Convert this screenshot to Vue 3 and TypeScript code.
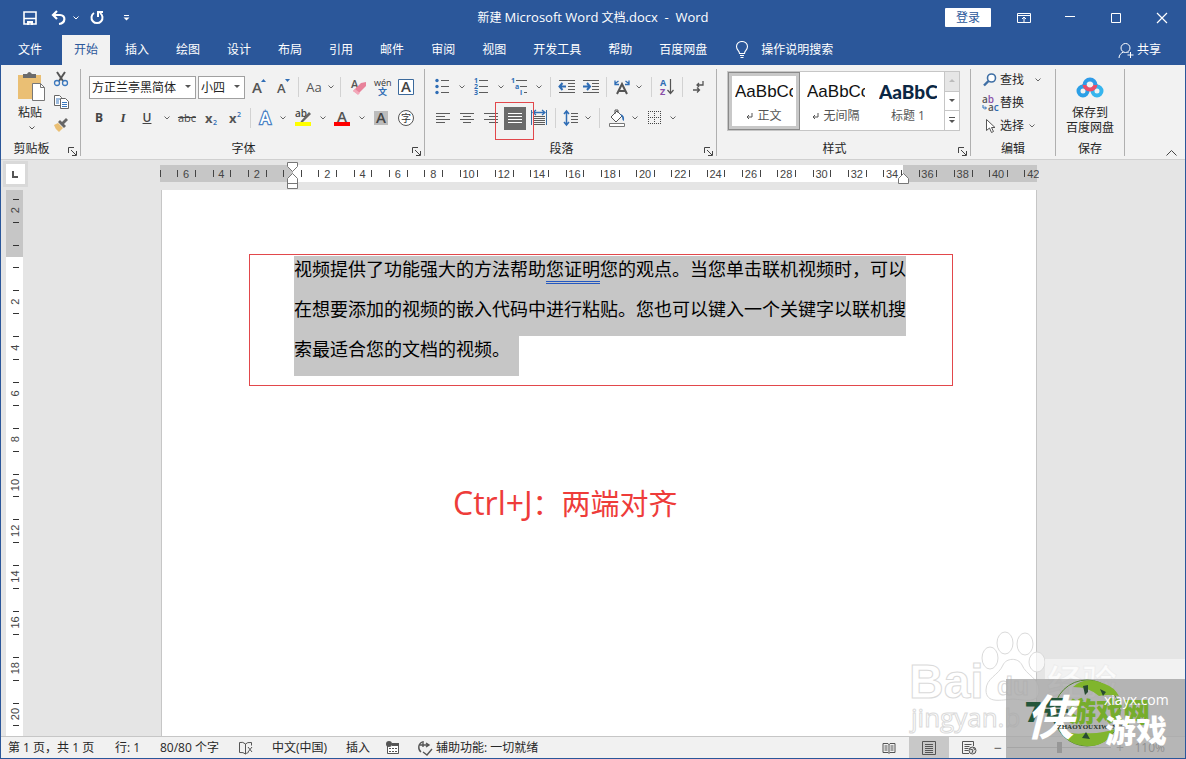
<script setup lang="ts">
import { ref } from 'vue'

interface Tool {
  kind: 'icon' | 'glyph' | 'chev' | 'sep'
  w: number
  name?: string
  text?: string
  label?: string
}

const tabs = ['文件', '开始', '插入', '绘图', '设计', '布局', '引用', '邮件', '审阅', '视图', '开发工具', '帮助', '百度网盘']
const activeTab = ref('开始')
const zoom = ref(110)

const icon = (name: string, w: number, label: string): Tool => ({ kind: 'icon', name, w, label })
const glyph = (name: string, w: number, text: string, label: string): Tool => ({ kind: 'glyph', name, w, text, label })
const chev = (w: number): Tool => ({ kind: 'chev', w, label: '更多选项' })
const sep = (w: number): Tool => ({ kind: 'sep', w })

const fontTop: Tool[] = [
  icon('grow', 24, '增大字号'), icon('shrink', 24, '减小字号'), sep(6),
  glyph('case', 26, 'Aa', '更改大小写'), chev(8), sep(11),
  icon('eraser', 24, '清除格式'), icon('pinyin', 24, '拼音指南'), icon('boxed', 24, '字符边框'),
]
const fontBottom: Tool[] = [
  glyph('bold', 24, 'B', '加粗'), glyph('italic', 24, 'I', '倾斜'), glyph('under', 24, 'U', '下划线'), chev(16),
  glyph('strike', 24, 'abc', '删除线'), icon('sub', 24, '下标'), icon('sup', 24, '上标'), sep(7),
  icon('effect', 24, '文本效果'), chev(10), icon('highlight', 30, '突出显示'), chev(10),
  icon('color', 28, '字体颜色'), chev(12), icon('shade', 26, '字符底纹'), icon('circled', 24, '带圈字符'),
]
const paraTop: Tool[] = [
  icon('bullets', 24, '项目符号'), chev(14), icon('numbers', 26, '编号'), chev(12), icon('levels', 26, '多级列表'), chev(12), sep(10),
  icon('outdent', 24, '减少缩进量'), icon('indent', 24, '增加缩进量'), sep(6), icon('asian', 26, '中文版式'), chev(8), sep(16),
  icon('sort', 16, '排序'), sep(14), icon('marks', 18, '显示编辑标记'),
]
const paraBottom: Tool[] = [
  icon('left', 24, '左对齐'), icon('center', 24, '居中'), icon('right', 24, '右对齐'), icon('justify', 24, '两端对齐'), icon('spread', 24, '分散对齐'), sep(8),
  icon('spacing', 24, '行距'), chev(10), sep(12), icon('bucket', 24, '底纹'), chev(12), icon('borders', 26, '边框'), chev(12),
]

const T = 'font-family="Open Sans, Noto Sans CJK SC, sans-serif"'
const hl = (ys: number[], x1: number, x2: number, c = '#5c5c5c') =>
  ys.map((y) => `<path d="M${x1} ${y + 0.5}H${x2}" stroke="${c}"/>`).join('')

// Every ribbon icon is drawn on a 24 x 24 grid.
const icons: Record<string, string> = {
  grow: `<text x="5" y="18" font-size="15" font-weight="600" fill="#555" ${T}>A</text><path d="M14 7l2.500-3 2.500 3z" fill="#2f6db5"/>`,
  shrink: `<text x="6" y="18" font-size="13" font-weight="600" fill="#555" ${T}>A</text><path d="M14 4h5l-2.500 3z" fill="#2f6db5"/>`,
  eraser: `<text x="5" y="13" font-size="11" font-weight="600" fill="#555" ${T}>A</text><path d="M7 16l8-8 5-1 0 4-8 8z" fill="#e8829a"/><path d="M7 16l2-2 5 4-2 2z" fill="#f3a9ba"/>`,
  pinyin: `<text x="4" y="11" font-size="9" fill="#333" ${T}>wén</text><text x="8" y="20" font-size="9" font-weight="700" fill="#2f6db5" ${T}>文</text>`,
  boxed: `<path d="M4.500 4.500h15v15h-15z" fill="#fff" stroke="#3c6a9c"/><text x="7" y="17" font-size="15" font-weight="600" fill="#444" ${T}>A</text>`,
  sub: `<text x="6" y="17" font-size="13" font-weight="700" fill="#555" ${T}>x</text><text x="14" y="19" font-size="7" font-weight="600" fill="#2f6db5" ${T}>2</text>`,
  sup: `<text x="6" y="17" font-size="13" font-weight="700" fill="#555" ${T}>x</text><text x="14" y="11" font-size="7" font-weight="600" fill="#2f6db5" ${T}>2</text>`,
  effect: `<text x="6" y="18" font-size="16" font-weight="600" fill="#fff" stroke="#4a82c4" stroke-width="2.500" paint-order="stroke" ${T}>A</text>`,
  highlight: `<text x="4" y="11" font-size="10" font-weight="600" fill="#444" ${T}>ab</text><path d="M10 15l8-9 2 2-8 8-3 1z" fill="#666"/><path d="M4 16h16v4H4z" fill="#ff0"/>`,
  color: `<text x="7" y="16" font-size="15" font-weight="600" fill="#555" ${T}>A</text><path d="M4 16h16v4H4z" fill="#f00"/>`,
  shade: `<path d="M5 5h14v14H5z" fill="#bcbcbc"/><text x="7" y="17" font-size="15" font-weight="600" fill="#444" ${T}>A</text>`,
  circled: `<circle cx="12" cy="12" r="7.500" fill="#fff" stroke="#555"/><text x="7" y="16" font-size="10" fill="#333" ${T}>字</text>`,
  bullets: `<g fill="#2f6db5"><circle cx="6" cy="5.500" r="1.700"/><circle cx="6" cy="11.500" r="1.700"/><circle cx="6" cy="17.500" r="1.700"/></g>` + hl([5, 11, 17], 10, 18),
  numbers: `<g fill="#2f6db5" font-size="7" font-weight="700" ${T}><text x="4" y="8">1</text><text x="4" y="14">2</text><text x="4" y="20">3</text></g>` + hl([5, 11, 17], 9, 18),
  levels: `<g fill="#2f6db5" font-size="7" font-weight="700" ${T}><text x="3" y="8">1</text><text x="7" y="14">a</text><text x="12" y="20">i</text></g>` + hl([5], 8, 19) + hl([11], 12, 19) + hl([17], 16, 19),
  outdent: hl([5, 17], 4, 20) + hl([8, 11, 14], 13, 20) + `<path d="M4 11.500h7M7.500 8l-3 3.500 3 3.500" fill="none" stroke="#2f6db5" stroke-width="2"/>`,
  indent: hl([5, 17], 4, 20) + hl([8, 11, 14], 13, 20) + `<path d="M4 11.500h7M8 8l3 3.500-3 3.500" fill="none" stroke="#2f6db5" stroke-width="2"/>`,
  asian: `<path d="M7 19l5-10 5 10M9 16h6" fill="none" stroke="#555" stroke-width="2"/><path d="M4.500 9l4-3M5 5.500v4h4M19.500 9l-4-3M19 5.500v4h-4" fill="none" stroke="#2f6db5" stroke-width="1.300"/>`,
  sort: `<text x="5" y="11" font-size="9" font-weight="700" fill="#2f6db5" ${T}>A</text><text x="5" y="20" font-size="9" font-weight="700" fill="#8a4fa8" ${T}>Z</text><path d="M15.500 4v14M12.500 15l3 3.500 3-3.500" fill="none" stroke="#555" stroke-width="1.200"/>`,
  marks: `<path d="M17 6v4h-6M13 8l-2 2 2 2M7 15h6M11 12.500l2.500 2.500-2.500 2.500" fill="none" stroke="#555" stroke-width="1.300"/>`,
  left: hl([7, 13], 5, 19) + hl([10, 16], 5, 14),
  center: hl([7, 13], 5, 19) + hl([10, 16], 8, 16),
  right: hl([7, 13], 5, 19) + hl([10, 16], 10, 19),
  justify: `<path d="M1 1h22v23H1z" fill="#6a6a6a"/>` + hl([7, 10, 13, 16], 5, 19, '#fff'),
  spread: `<path d="M4.500 4v15M19.500 4v15" stroke="#3a6ea5"/>` + hl([10, 12, 14, 16, 18], 6, 18) + `<path d="M6 6.500h12M9 4L6 6.500 9 9M15 4l3 2.500L15 9" fill="none" stroke="#2f6db5" stroke-width="1.300"/>`,
  spacing: `<path d="M7.500 5v13M5 8l2.500-3L10 8M5 16l2.500 3 2.500-3" fill="none" stroke="#2f6db5" stroke-width="1.500"/>` + hl([7, 10, 13, 16], 12, 19),
  bucket: `<path d="M6 11l6-6 5 5-6 6z" fill="#fff" stroke="#555"/><path d="M10 8V4h3v3" fill="none" stroke="#555"/><path d="M15 8q5 1 4 7-2-1-2-4z" fill="#2f6db5"/><path d="M4.500 17.500h15v3h-15z" fill="#fff" stroke="#777"/>`,
  borders: `<path d="M6 5.500h13M6 11.500h13M6 17.500h13M6.500 5v13M12.500 5v13M18.500 5v13" fill="none" stroke="#444" stroke-dasharray="1 1"/>`,
}

const unitX = 17.65
const originX = 133
const hTicks = Array.from({ length: 50 }, (_, i) => originX + (i - 7.5) * unitX)
const hNumbers = Array.from({ length: 25 }, (_, i) => (i - 3) * 2)
  .filter((n) => n !== 0 && n <= 42)
  .map((n) => ({ n: Math.abs(n), x: originX + n * unitX }))
const unitY = 22.9
const originY = 66
const vTicks = Array.from({ length: 24 }, (_, i) => originY + (i - 2.5) * unitY)
const vNumbers = Array.from({ length: 12 }, (_, i) => (i - 1) * 2)
  .filter((n) => n !== 0)
  .map((n) => ({ n: Math.abs(n), y: originY + n * unitY }))

const rows = { font: [fontTop, fontBottom], para: [paraTop, paraBottom] }
const styles = [
  { name: '正文', mark: true, kind: 'on' },
  { name: '无间隔', mark: true, kind: '' },
  { name: '标题 1', mark: false, kind: 'heading' },
]
</script>

<template>
  <div class="window">
    <header class="titlebar">
      <div class="quick">
        <button class="q-save" aria-label="保存"><svg width="14" height="14"><path d="M1 1h12v12H1zM1 7.500h12" fill="none" stroke="#fff" stroke-width="1.600" /><path d="M4 10h6v4H8v-2H6v2H4z" fill="#fff" /></svg></button>
        <button class="q-undo" aria-label="撤消"><svg width="16" height="16"><path d="M6 1L2 5l4 4M2 5h7c6 0 6 8-1 9" fill="none" stroke="#fff" stroke-width="2.200" /></svg></button>
        <button class="q-chev" aria-label="撤消列表"><svg width="6" height="4"><path d="M.5.5L3 3 5.500.5" fill="none" stroke="#fff" /></svg></button>
        <button class="q-redo" aria-label="重复"><svg width="16" height="16"><path d="M5 3a5.500 5.500 0 1 0 6 0M9 7V2h5" fill="none" stroke="#fff" stroke-width="2" /></svg></button>
        <button class="q-more" aria-label="自定义快速访问工具栏"><svg width="7" height="7"><path d="M1 1.500h5" stroke="#fff" /><path d="M.5 3.500h6l-3 3z" fill="#fff" /></svg></button>
      </div>
      <h1>新建 <span>Microsoft Word</span> 文档<span>.docx&nbsp; -&nbsp; Word</span></h1>
      <div class="controls">
        <button class="login">登录</button>
        <button class="ctl" aria-label="功能区显示选项"><svg width="14" height="12"><path d="M.5 1.500h13v9H.5zM.5 3.500h13M7 10V5M5 7l2-2 2 2" fill="none" stroke="#fff" /></svg></button>
        <button class="ctl" aria-label="最小化"><svg width="12" height="12"><path d="M1 4.500h10" stroke="#fff" /></svg></button>
        <button class="ctl" aria-label="最大化"><svg width="12" height="12"><path d="M1.500 1.500h9v9h-9z" fill="none" stroke="#fff" /></svg></button>
        <button class="ctl" aria-label="关闭"><svg width="12" height="12"><path d="M1 1l10 10M11 1L1 11" stroke="#fff" stroke-width="1.200" /></svg></button>
      </div>
    </header>

    <nav class="tabs">
      <button v-for="t in tabs" :key="t" class="tab" :class="{ active: t === activeTab, file: t === '文件' }" @click="activeTab = t">{{ t }}</button>
      <button class="tell">
        <svg width="14" height="18"><path d="M4.500 12.500c0-3-3-3.500-3-7a5.500 5 0 0 1 11 0c0 3.500-3 4-3 7zM5 14.500h4M5.500 16.500h3" fill="none" stroke="#fff" stroke-width="1.100" /></svg>
        操作说明搜索
      </button>
      <button class="share">
        <svg width="16" height="17"><circle cx="7.500" cy="6" r="4.500" fill="none" stroke="#fff" /><path d="M1 16c0-3 2-5 4.500-6M9.500 10l1 1M12.500 10v6M9.500 13h6" fill="none" stroke="#fff" /></svg>
        共享
      </button>
    </nav>

    <section class="ribbon">
      <div class="group clip">
        <div class="clip-body">
          <button class="paste">
            <svg width="30" height="31"><path d="M1 4h23v24H1z" fill="#eabf74" /><path d="M6 7V3h4q2-4 5 0h4v4z" fill="#6b6b6b" /><path d="M15.500 12.500h8l4 4v13h-12z" fill="#fff" stroke="#777" /><path d="M23.500 12.500v4h4" fill="none" stroke="#777" /></svg>
            <span>粘贴</span>
            <svg class="chev" width="6" height="4"><path d="M.5.5L3 3 5.500.5" fill="none" stroke="#555" /></svg>
          </button>
          <div class="clip-side">
            <button aria-label="剪切"><svg width="16" height="16"><path d="M4 1l6 9M12 1L6 10" stroke="#555" stroke-width="2" /><circle cx="4" cy="12" r="2.500" fill="none" stroke="#3c78bd" stroke-width="1.300" /><circle cx="12" cy="12" r="2.500" fill="none" stroke="#3c78bd" stroke-width="1.300" /></svg></button>
            <button aria-label="复制"><svg width="16" height="16"><path d="M1.500 1.500h5l2 2v8h-7z" fill="#fff" stroke="#666" /><path d="M3 5h4M3 7h3M3 9h3" stroke="#3c78bd" /><path d="M7.500 4.500h5l3 3v7h-8z" fill="#fff" stroke="#666" /><path d="M9 8.500h5M9 10.500h5M9 12.500h5" stroke="#3c78bd" /></svg></button>
            <button aria-label="格式刷"><svg width="16" height="16"><path d="M1 8l4-2 5 5-4 4q-4-3-5-7z" fill="#eabf74" /><path d="M5 5l2-2 2 2 4-4 2 2-4 4 2 2-2 2z" fill="#666" /></svg></button>
          </div>
        </div>
        <div class="caption">剪贴板</div>
        <button class="launch" aria-label="剪贴板选项"><svg width="9" height="9"><path d="M.5 6V.5H6M3 3l5 5M8.500 4v4.500H4" fill="none" stroke="#444" /></svg></button>
      </div>

      <div v-for="(lines, key) in rows" :key="key" class="group" :class="key">
        <div v-for="(line, li) in lines" :key="li" class="row">
          <template v-if="key === 'font' && li === 0">
            <label class="combo family"><select aria-label="字体"><option>方正兰亭黑简体</option></select><svg width="6" height="4"><path d="M0 0h6L3 3z" fill="#555" /></svg></label>
            <label class="combo size"><select aria-label="字号"><option>小四</option></select><svg width="6" height="4"><path d="M0 0h6L3 3z" fill="#555" /></svg></label>
          </template>
          <template v-for="(t, i) in line" :key="i">
            <i v-if="t.kind === 'sep'" class="sep" :style="{ width: t.w + 'px' }"></i>
            <button v-else class="tool" :style="{ width: t.w + 'px' }" :aria-label="t.label">
              <svg v-if="t.kind === 'chev'" width="6" height="4"><path d="M.5.5L3 3 5.500.5" fill="none" stroke="#666" /></svg>
              <span v-else-if="t.kind === 'glyph'" :class="t.name">{{ t.text }}</span>
              <svg v-else width="24" height="24" v-html="icons[t.name!]"></svg>
              <span v-if="t.name === 'justify'" class="marker"></span>
            </button>
          </template>
        </div>
        <div class="caption">{{ key === 'font' ? '字体' : '段落' }}</div>
        <button class="launch" aria-label="更多设置"><svg width="9" height="9"><path d="M.5 6V.5H6M3 3l5 5M8.500 4v4.500H4" fill="none" stroke="#444" /></svg></button>
      </div>

      <div class="group styles">
        <div class="gallery">
          <button v-for="s in styles" :key="s.name" class="style" :class="s.kind">
            <span class="sample">AaBbCc</span>
            <span class="sname"><svg v-if="s.mark" width="7" height="7"><path d="M6 0v4H1M3 2L1 4l2 2" fill="none" stroke="#555" /></svg>{{ s.name }}</span>
          </button>
          <div class="scroll">
            <button aria-label="上一行" class="off"><svg width="6" height="4"><path d="M0 3h6L3 0z" fill="#bbb" /></svg></button>
            <button aria-label="下一行"><svg width="6" height="4"><path d="M0 0h6L3 3z" fill="#555" /></svg></button>
            <button aria-label="其他样式"><svg width="6" height="7"><path d="M0 .5h6" stroke="#555" /><path d="M0 3h6L3 6z" fill="#555" /></svg></button>
          </div>
        </div>
        <div class="caption">样式</div>
        <button class="launch" aria-label="样式窗格"><svg width="9" height="9"><path d="M.5 6V.5H6M3 3l5 5M8.500 4v4.500H4" fill="none" stroke="#444" /></svg></button>
      </div>

      <div class="group edit">
        <button><svg width="16" height="16"><circle cx="9.500" cy="6" r="4" fill="#fff" stroke="#3f6fa5" stroke-width="1.600" /><path d="M6.500 9L2 13.500" stroke="#3f6fa5" stroke-width="2.400" /></svg>查找<svg class="far" width="6" height="4"><path d="M.5.5L3 3 5.500.5" fill="none" stroke="#666" /></svg></button>
        <button>
          <svg width="18" height="18" font-size="10" font-weight="600" font-family="Open Sans, sans-serif"><text x="0" y="9" fill="#555">a<tspan fill="#8a4fa8">b</tspan></text><text x="6" y="17" fill="#555">a<tspan fill="#2f6db5">c</tspan></text><path d="M1 11v3h3M3 12.500L4.500 14 3 15.500" fill="none" stroke="#2f6db5" /></svg>替换
        </button>
        <button><svg width="16" height="16"><path d="M4.500 1.500v11l3-2.500 2 4.500 2-1-2-4h3.500z" fill="#fff" stroke="#555" /></svg>选择<svg class="near" width="6" height="4"><path d="M.5.5L3 3 5.500.5" fill="none" stroke="#666" /></svg></button>
        <div class="caption">编辑</div>
      </div>

      <div class="group save">
        <button>
          <svg width="28" height="24" fill="none" stroke-width="4"><circle cx="7" cy="15" r="4.500" stroke="#2b9fe6" /><circle cx="21" cy="15" r="4.500" stroke="#36b5ee" /><path d="M8.500 8a5.500 5.500 0 0 0 11 0" stroke="#ec4d68" /><path d="M8.500 9a5.500 5.500 0 0 1 11 0" stroke="#2f9be8" /></svg>
          <span>保存到</span><span>百度网盘</span>
        </button>
        <div class="caption">保存</div>
      </div>
      <button class="collapse" aria-label="折叠功能区"><svg width="11" height="6"><path d="M.5 5.500l5-5 5 5" fill="none" stroke="#444" /></svg></button>
    </section>

    <main class="workspace">
      <div class="corner"><button aria-label="制表符"><svg width="7" height="7"><path d="M1 0v6h5" fill="none" stroke="#555" stroke-width="2" /></svg></button></div>
      <div class="hruler">
        <svg width="880" height="30">
          <path d="M1 5h877v17H1z" fill="#c6c6c6" /><path d="M134 5h610v17H134z" fill="#fff" />
          <path v-for="x in hTicks" :key="x" :d="`M${Math.round(x) + 0.5} 10v7`" stroke="#444" />
          <text v-for="m in hNumbers" :key="m.x" :x="m.x" y="18">{{ m.n }}</text>
          <g fill="#fff" stroke="#777"><path d="M128.500 2.500h10v4l-5 5-5-5zM133.500 13.500l5 5v10h-10v-10zM128.500 23.500h10" /><path d="M744.500 13.500l5 5v5h-10v-5z" /></g>
        </svg>
      </div>
      <div class="vruler">
        <svg width="17" height="546">
          <path d="M0 0h17v67H0z" fill="#c6c6c6" /><path d="M0 67h17v479H0z" fill="#fff" />
          <path v-for="y in vTicks" :key="y" :d="`M7 ${Math.round(y) + 0.5}h6`" stroke="#333" />
          <text v-for="m in vNumbers" :key="m.y" :transform="`translate(13 ${m.y}) rotate(-90)`">{{ m.n }}</text>
        </svg>
      </div>
      <div class="canvas">
        <article class="page">
          <div class="callout">
            <p class="full">视频提供了功能强大的方法帮助<u>您证明</u>您的观点。当您单击联机视频时，可以</p>
            <p class="full">在想要添加的视频的嵌入代码中进行粘贴。您也可以键入一个关键字以联机搜</p>
            <p class="last">索最适合您的文档的视频。</p>
          </div>
          <div class="shortcut"><kbd>Ctrl+J</kbd>：两端对齐</div>
        </article>
      </div>
    </main>

    <footer class="status">
      <div class="facts">
        <span>第 1 页，共 1 页</span><span>行: 1</span><span>80/80 个字</span>
        <svg width="16" height="14"><path d="M7.500 13V3Q5 .5 1.500 1.500v10q4-.5 6 1.500 1-1 3-1.500M7.500 3q1.500-2 6-1.500v3M10 6l4 5M14 6l-4 5" fill="none" stroke="#555" /></svg>
        <span>中文(中国)</span><span>插入</span>
        <svg width="14" height="14"><path d="M1.500 3.500h11v9h-11z" fill="#fff" stroke="#555" /><path d="M6 2h7v3H6z" fill="#555" /><circle cx="3" cy="3" r="3" fill="#555" /><path d="M3 7.500h8M3 10.500h8" stroke="#555" stroke-dasharray="2 1" /></svg>
        <span class="access"><svg width="18" height="16"><path d="M6 2a6 6 0 0 0-1 10M7 1v6M4 5h9M10 3l3 2-3 2M7 12l4 3 5-6" fill="none" stroke="#555" stroke-width="1.400" /></svg>辅助功能: 一切就绪</span>
      </div>
      <div class="views">
        <button aria-label="阅读视图"><svg width="14" height="12"><path d="M1 1.500h5l1 1 1-1h5v9H8l-1 1-1-1H1zM7 2v9M2.500 4h3M2.500 6h3M2.500 8h3M8.500 4h3M8.500 6h3M8.500 8h3" fill="none" stroke="#555" /></svg></button>
        <button class="on" aria-label="页面视图"><svg width="14" height="14"><path d="M.5.500h13v13H.5zM3 3.500h8M3 5.500h8M3 7.500h8M3 9.500h8M3 11.500h8" fill="none" stroke="#555" /></svg></button>
        <button aria-label="Web 版式"><svg width="15" height="14"><path d="M7 12.500H.5V.5h11V5M2.500 3.500h7M2.500 5.500h5M2.500 7.500h4M2.500 9.500h4" fill="none" stroke="#555" /><circle cx="10.500" cy="9.500" r="3.500" fill="#ddd" stroke="#555" /><path d="M8 8l3 1-1 3M11 6l2 3" stroke="#555" fill="none" /></svg></button>
        <button class="step" aria-label="缩小">−</button>
        <input v-model.number="zoom" type="range" min="10" max="210" aria-label="显示比例" />
        <button class="step" aria-label="放大">+</button>
        <span class="pct">110%</span>
      </div>
    </footer>

    <svg class="stamp" width="296" height="139" aria-hidden="true">
      <g class="ghost">
        <text class="round" x="19" y="78" font-size="48">Bai</text>
        <ellipse cx="100" cy="38" rx="8" ry="11" /><ellipse cx="115" cy="23" rx="8" ry="11" /><ellipse cx="135" cy="24" rx="8" ry="11" /><ellipse cx="147" cy="42" rx="8" ry="10" />
        <path d="M96 70c0-12 13-15 17-25 3-7 15-8 19 0 4 10 17 13 17 25 0 14-14 10-26 9-12 1-27 5-27-9z" />
        <text class="round" x="107" y="75" font-size="26">du</text>
        <text x="157" y="75" font-size="35" font-weight="700">经验</text>
        <text x="21" y="107" font-size="26">jingyan.b</text>
      </g>
      <path d="M155 39h141v20H155z" fill="#fff" opacity=".5" />
      <path d="M116 59h180v80H116z" fill="#a8a8a8" opacity=".8" />
      <circle cx="197" cy="93" r="33" fill="none" stroke="#55862f" />
      <path d="M183 67q12-12 32-3 9 3 14 12-12-2-20 0-10-9-26-9z" fill="#80b52d" />
      <path d="M170 111q18 4 24 2 18 1 31-4-8 17-26 17-20 0-29-15z" fill="#80b52d" />
      <path d="M193 66l5-1v7l-3 3zM210 69l6 3-3 4zM192 118l4-6 4 7z" fill="#294b32" />
      <text x="135" y="102" font-size="28" font-weight="900" fill="#24563b">7号</text>
      <text x="179" y="102" font-size="27" font-weight="900" fill="#76ad2c">游戏网</text>
      <text x="136" y="115" font-size="48" font-weight="700" font-style="italic" fill="#fff">侠</text>
      <text class="latin" x="167" y="109" font-size="7" font-weight="700" fill="#26352a">ZHAOYOUXIWANG</text>
      <text x="214" y="85" font-size="14" fill="#fff">xiayx.com</text>
      <text x="215" y="122" font-size="31" font-weight="900" fill="#fff">游戏</text>
    </svg>
  </div>
</template>

<style>
body { margin: 0; }
</style>

<style scoped>
* { box-sizing: border-box; }
.window {
  position: relative; display: flex; flex-direction: column; min-height: 100vh; overflow: hidden;
  border: 1px solid #2b579a; border-top: 0; background: #e5e5e5; color: #262626;
  font: 12px/16px "Open Sans", "Noto Sans CJK SC", sans-serif;
}
button { margin: 0; padding: 0; border: 0; background: none; color: inherit; font: inherit; white-space: nowrap; }
svg { display: block; flex: none; }
h1, p { margin: 0; font: inherit; }

.titlebar { display: grid; grid-template-columns: 1fr auto 1fr; align-items: center; height: 35px; background: #2b579a; color: #fff; }
.quick { display: flex; align-items: center; padding-left: 22px; }
.q-undo { margin-left: 14px; }
.q-chev { margin-left: 6px; }
.q-redo { margin-left: 10px; }
.q-more { margin-left: 18px; }
.titlebar h1 { line-height: 32px; }
.titlebar h1 span { font-size: 13px; }
.controls { display: flex; align-items: center; justify-content: flex-end; height: 33px; }
.login { width: 46px; height: 19px; margin-right: 10px; border-radius: 1px; background: #fff; color: #2b579a; line-height: 18px; }
.ctl { display: flex; align-items: center; justify-content: center; width: 46px; height: 32px; }

.tabs { display: flex; gap: 3px; height: 30px; background: #2b579a; color: #fff; }
.tab { padding: 0 12px; line-height: 28px; }
.tab.file { padding: 0 17px; }
.tab.active { background: #f2f2f2; color: #2b579a; }
.tell { display: flex; align-items: center; gap: 12px; margin-left: 13px; }
.share { display: flex; align-items: center; gap: 3px; margin-left: auto; padding-right: 24px; }

.ribbon { display: flex; height: 95px; padding-top: 4px; border-bottom: 1px solid #d0d0d0; background: #f2f2f2; }
.group { position: relative; flex: none; height: 87px; border-right: 1px solid #b0b0b0; }
.caption { position: absolute; left: 0; right: 0; bottom: -1px; text-align: center; }
.launch { position: absolute; right: 3px; bottom: 0; }
.clip { width: 80px; }
.clip .caption { right: 18px; }
.clip-body { display: flex; gap: 6px; padding: 2px 0 0 16px; }
.paste { display: flex; flex-direction: column; align-items: center; width: 30px; }
.paste span { margin: 3px 4px 0 0; }
.paste .chev { margin-top: 5px; }
.clip-side { display: flex; flex-direction: column; gap: 7px; }
.font { width: 344px; padding: 6px 0 0 6px; }
.font .caption { right: 18px; }
.para { width: 292px; padding: 6px 0 0 6px; }
.para .caption { right: 18px; }
.row { display: flex; align-items: center; height: 24px; margin-bottom: 7px; }
.combo { display: grid; align-items: center; height: 23px; border: 1px solid #a0a0a0; background: #fff; }
.combo select { grid-area: 1 / 1; width: 100%; height: 21px; padding: 1px 0 0 2px; border: 0; appearance: none; background: transparent; color: #222; font: inherit; }
.combo svg { grid-area: 1 / 1; justify-self: end; margin-right: 4px; pointer-events: none; }
.family { width: 107px; margin: 0 2px; }
.size { width: 47px; margin-right: 2px; }
.tool { position: relative; display: flex; align-items: center; justify-content: center; flex: none; height: 24px; }
.sep { display: flex; justify-content: center; flex: none; height: 20px; }
.sep::before { content: ""; width: 1px; background: #d2d2d2; }
.case { color: #555; font-size: 13px; }
.bold { color: #444; font-weight: 700; }
.italic { color: #444; font: italic 600 13px "Liberation Serif", serif; }
.under { color: #444; font-weight: 600; text-decoration: underline; }
.strike { color: #444; font-size: 11px; text-decoration: line-through; }
.marker { position: absolute; inset: -4px -7px -10px -8px; z-index: 1; border: 1px solid #e2474b; }

.styles { width: 254px; padding: 2px 10px 0; }
.gallery { display: flex; width: 233px; height: 60px; border: 1px solid #c6c6c6; background: #fff; }
.style { display: flex; flex-direction: column; align-items: center; width: 72px; padding: 8px 6px 0; border: 1px solid transparent; }
.style.on { border-color: #8a8a8a; box-shadow: inset 0 0 0 3px #c8c8c8; }
.sample { width: 58px; overflow: hidden; color: #111; font-family: "Liberation Sans", sans-serif; font-size: 17px; line-height: 22px; text-align: left; }
.heading .sample { color: #0b2744; font-family: Lato, sans-serif; font-size: 19px; font-weight: 900; }
.sname { display: flex; align-items: center; gap: 4px; margin-top: 5px; color: #555; }
.scroll { display: flex; flex-direction: column; width: 15px; }
.scroll button { display: flex; flex: 1; align-items: center; justify-content: center; border-left: 1px solid #c6c6c6; border-bottom: 1px solid #c6c6c6; background: #fff; }
.scroll button:last-child { border-bottom: 0; }
.scroll .off { background: #e6e6e6; }
.styles .caption { right: 18px; }

.edit { width: 85px; }
.edit button { display: flex; align-items: center; height: 23px; padding: 0 0 2px 11px; }
.edit button svg:first-child { width: 18px; }
.edit .far { margin-left: 11px; }
.edit .near { margin-left: 5px; }
.save { width: 69px; }
.save button { display: flex; flex-direction: column; align-items: center; width: 68px; padding-top: 7px; }
.save button span:first-of-type { margin-top: 5px; }
.save button span { line-height: 15px; }
.collapse { margin: auto 8px 3px auto; }

.workspace { display: grid; grid-template-columns: 23px 1fr; grid-template-rows: 30px 1fr; flex: 1; min-height: 0; }
.corner { padding: 1px 0 0 2px; }
.corner button { display: flex; align-items: center; justify-content: center; width: 25px; height: 26px; border: 3px solid #d9d9d9; background: #fff; }
.hruler { display: flex; justify-content: center; padding-right: 11px; }
.hruler text, .vruler text { fill: #444; font: 11px "Liberation Sans", sans-serif; text-anchor: middle; }
.vruler { padding-left: 5px; }
.canvas { display: flex; justify-content: center; padding-right: 11px; }
.page { width: 876px; border: solid #c6c6c6; border-width: 0 1px; background: #fff; padding: 64px 83px 0 87px; }
.callout { padding: 1px 0 9px 44px; border: 1px solid #e2474b; color: #000; font-size: 18px; line-height: 26px; white-space: nowrap; }
.callout p { height: 40px; background: #c6c6c6; }
.full { width: 612px; }
.last { width: 225px; }
.callout u { text-decoration: none; border-bottom: 3px double #2458c0; }
.shortcut { margin-top: 97px; padding-left: 204px; color: #ee3c3a; font-size: 29px; line-height: 40px; }
.shortcut kbd { font: inherit; font-size: 32px; }

.status { display: flex; justify-content: space-between; align-items: center; height: 22px; border-top: 1px solid #c6c6c6; background: #f1f1f1; }
.facts { display: grid; grid-template-columns: 107px 45px 78px 34px 74px 40px 30px auto; align-items: center; padding-left: 7px; white-space: nowrap; }
.access { display: flex; align-items: center; gap: 2px; }
.views { display: flex; align-items: center; height: 21px; padding-right: 20px; }
.views button { display: flex; align-items: center; justify-content: center; width: 40px; height: 21px; }
.views .on { background: #c8c8c8; }
.views .step { width: 18px; color: #555; font-size: 14px; }
.views input { width: 104px; height: 14px; margin: 0; appearance: none; background: linear-gradient(#999, #999) center / 100% 1px no-repeat; }
.views input::-webkit-slider-thumb { width: 5px; height: 11px; appearance: none; background: #555; }
.pct { width: 36px; text-align: right; }

.stamp { position: absolute; right: -1px; bottom: -1px; pointer-events: none; font-family: "Open Sans", "Noto Sans CJK SC", sans-serif; }
.ghost { fill: #fff; fill-opacity: .7; stroke: #dadada; stroke-width: 1; }
.round { font-family: "Liberation Sans", sans-serif; font-weight: 700; }
.latin { font-family: "Liberation Serif", serif; }
</style>
